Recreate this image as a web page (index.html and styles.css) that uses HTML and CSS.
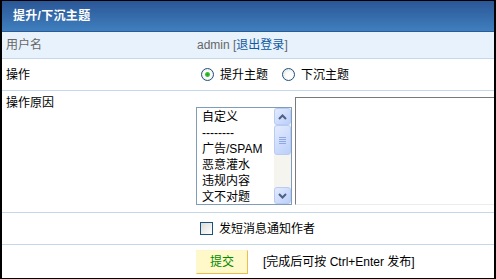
FILE: index.html
```html
<!DOCTYPE html>
<html lang="zh-CN">
<head>
    <meta charset="UTF-8">
    <title>提升/下沉主题</title>
    <link rel="stylesheet" href="styles.css">
</head>
<body>
    <form class="box">
        <div class="box-title">提升/下沉主题</div>

        <div class="row row-user">
            <div class="cell-label">用户名</div>
            <div class="cell-value">admin [<a href="#">退出登录</a>]</div>
        </div>

        <div class="row">
            <div class="cell-label">操作</div>
            <div class="cell-value">
                <label class="opt"><input type="radio" name="action" checked> 提升主题</label>
                <label class="opt"><input type="radio" name="action"> 下沉主题</label>
            </div>
        </div>

        <div class="row row-reason">
            <div class="cell-label">操作原因</div>
            <div class="cell-value reason">
                <div class="listbox">
                    <ul class="listbox-items">
                        <li>自定义</li>
                        <li>--------</li>
                        <li>广告/SPAM</li>
                        <li>恶意灌水</li>
                        <li>违规内容</li>
                        <li>文不对题</li>
                    </ul>
                    <div class="scrollbar">
                        <span class="sb-btn">
                            <svg width="9" height="6" viewBox="0 0 9 6"><path d="M1 5 L4.5 1.5 L8 5" fill="none" stroke="#4d6185" stroke-width="2"/></svg>
                        </span>
                        <span class="sb-thumb"><i></i><i></i><i></i><i></i></span>
                        <span class="sb-track"></span>
                        <span class="sb-btn">
                            <svg width="9" height="6" viewBox="0 0 9 6"><path d="M1 1 L4.5 4.5 L8 1" fill="none" stroke="#4d6185" stroke-width="2"/></svg>
                        </span>
                    </div>
                </div>
                <textarea class="reason-text"></textarea>
            </div>
        </div>

        <div class="row">
            <div class="cell-label"></div>
            <div class="cell-value">
                <label class="notify"><input type="checkbox"> 发短消息通知作者</label>
            </div>
        </div>

        <div class="row row-submit">
            <div class="cell-label"></div>
            <div class="cell-value">
                <button type="button" class="btn-submit">提交</button>
                <span class="hint">[完成后可按 Ctrl+Enter 发布]</span>
            </div>
        </div>
    </form>
</body>
</html>
```

FILE: styles.css
```css
body {
    margin: 0;
    padding: 0;
    font-family: "Liberation Sans", "Noto Sans CJK SC", sans-serif;
    font-size: 12px;
    line-height: 16px;
    color: #000;
}
.box {
    box-sizing: border-box;
    width: 496px;
    height: 279px;
    margin: 0;
    border: 1px solid #000;
    border-left-width: 2px;
    border-right-width: 2px;
    overflow: hidden;
    background: #fff;
}
.box-title {
    height: 30px;
    line-height: 30px;
    padding-left: 11px;
    color: #fff;
    font-weight: bold;
    letter-spacing: 0.3px;
    background: linear-gradient(#2b5696, #3f7fbe);
    border-bottom: 1px solid #2a5a98;
}
.row {
    display: grid;
    grid-template-columns: 194px 1fr;
    align-items: center;
    height: 31px;
    border-bottom: 1px solid #c5d8ea;
}
.row-user {
    height: 26px;
    background: #e8f2fc;
    color: #666;
}
.row-reason {
    height: 121px;
    align-items: start;
}
.row-submit {
    height: 33px;
    border-bottom: none;
}
.cell-label {
    padding-left: 4px;
}
.row-reason .cell-label {
    padding-top: 4px;
}
.cell-value {
    display: flex;
    align-items: center;
}
.row-user .cell-value {
    padding-left: 1px;
    display: block;
}
.row-user a {
    color: #10599f;
    text-decoration: none;
}

/* radios */
.opt {
    display: flex;
    align-items: center;
    margin-right: 14px;
}
.opt input {
    appearance: none;
    width: 13px;
    height: 13px;
    margin: 0 6px 0 5px;
    border: 1px solid #1c5180;
    border-radius: 50%;
    background: radial-gradient(circle at 60% 60%, #fff 30%, #dcdcd4 100%);
    box-sizing: border-box;
}
.opt + .opt input {
    margin-left: 0;
}
.opt input:checked {
    background: radial-gradient(circle, #1fa01f 0, #3cc43c 2px, #fff 3px, #fff 45%, #d8d8d0 100%);
}

/* reason */
.reason {
    align-items: flex-end;
    padding-top: 6px;
}
.listbox {
    display: flex;
    box-sizing: border-box;
    width: 96px;
    height: 98px;
    border: 1px solid #7f9db9;
    flex-shrink: 0;
}
.listbox-items {
    list-style: none;
    margin: 0;
    padding: 1px 0 0 5px;
    flex: 1;
}
.scrollbar {
    width: 17px;
    display: flex;
    flex-direction: column;
    background: #f5f4ef;
}
.sb-btn, .sb-thumb {
    box-sizing: border-box;
    height: 17px;
    border: 1px solid #b8cbf4;
    border-radius: 3px;
    background: linear-gradient(135deg, #e3ebfe, #bccffa);
    display: flex;
    align-items: center;
    justify-content: center;
}
.sb-thumb {
    height: 30px;
    flex-direction: column;
    gap: 1px;
}
.sb-thumb i {
    display: block;
    width: 7px;
    height: 1px;
    background: #8ea8e6;
}
.sb-track {
    flex: 1;
}
.reason-text {
    box-sizing: border-box;
    width: 220px;
    height: 108px;
    margin: 0 0 0 3px;
    padding: 2px;
    flex-shrink: 0;
    border: 1px solid;
    border-color: #7a7a7a #e2e2e2 #ececec #7a7a7a;
    resize: none;
    font: inherit;
}

/* notify */
.notify {
    display: flex;
    align-items: center;
}
.notify input {
    appearance: none;
    box-sizing: border-box;
    width: 13px;
    height: 13px;
    margin: 0 6px 0 4px;
    border: 1px solid #1c5180;
    background: linear-gradient(135deg, #dcdcd6, #fff);
}

/* submit */
.btn-submit {
    box-sizing: border-box;
    width: 52px;
    height: 24px;
    padding: 0;
    margin-right: 15px;
    border: 1px solid;
    border-color: #fff6cf #f0bc4f #f0bc4f #fff6cf;
    background: #fff8c9;
    color: #008a00;
    font: inherit;
    cursor: pointer;
}
.hint {
    color: #000;
}
```
